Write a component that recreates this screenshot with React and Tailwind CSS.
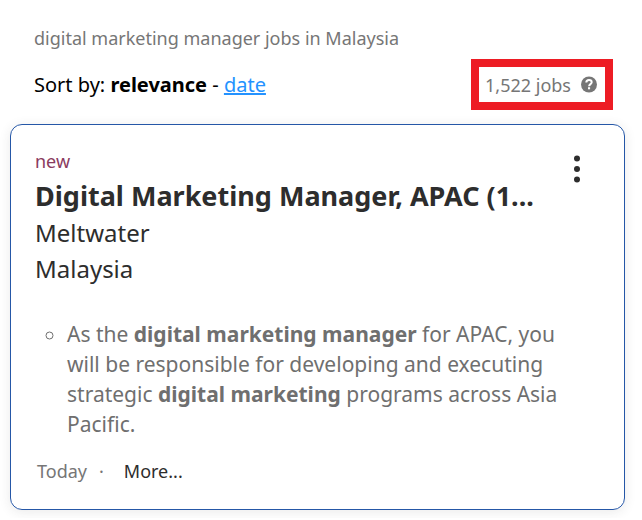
const matches = (
  <>
    As the <strong>digital marketing manager</strong> for APAC, you will be responsible for developing and
    executing strategic <strong>digital marketing</strong> programs across Asia Pacific.
  </>
)

function SearchHeader() {
  return (
    <header className="pl-6 pr-3">
      <h1 className="text-lg leading-7 text-[#767676]">digital marketing manager jobs in Malaysia</h1>
      <div className="flex items-center justify-between mt-[7px]">
        <p className="text-xl text-black">
          Sort by: <strong>relevance</strong> -{' '}
          <a href="#date" className="text-[#2492ff] underline">date</a>
        </p>
        {/* Job count */}
        <div className="flex items-center gap-2 h-[51px] px-1.5 border-8 border-[#ed1c24] text-[#767676]">
          <span className="text-lg">1,522 jobs</span>
          <button type="button" aria-label="About the job count">
            <svg viewBox="0 0 20 20" className="size-5" fill="none">
              <circle cx="10" cy="9.5" r="8" fill="#767676" />
              <path d="M7.3 7.5c0-1.6 1.1-2.5 2.7-2.5s2.7.9 2.7 2.3c0 1.8-2.6 1.9-2.6 3.9" stroke="#fff" strokeWidth="2" />
              <rect x="9" y="12.2" width="2.1" height="2.1" fill="#fff" />
            </svg>
          </button>
        </div>
      </div>
    </header>
  )
}

function JobCard() {
  return (
    <article className="mt-3.5 px-6 pt-5 pb-6 border border-[#2557a7] rounded-xl shadow-[0_2px_12px_rgba(45,45,45,0.1)]">
      <div className="flex items-start justify-between">
        <div className="text-[#2d2d2d]">
          <p className="text-lg leading-8 text-[#8a3b60]">new</p>
          <h2 className="text-[27px] leading-[38px] font-bold whitespace-nowrap">
            Digital Marketing Manager, APAC (1...
          </h2>
          <p className="text-2xl leading-9">Meltwater</p>
          <p className="text-2xl leading-9">Malaysia</p>
        </div>
        <button type="button" aria-label="Job options" className="mt-2 mr-4">
          <svg viewBox="0 0 14 32" className="w-3.5 h-8" fill="#2d2d2d">
            <circle cx="7" cy="5.5" r="3" />
            <circle cx="7" cy="16" r="3" />
            <circle cx="7" cy="26.5" r="3" />
          </svg>
        </button>
      </div>

      <ul className="mt-8 pl-8 pr-6 list-[circle] text-[21px] leading-[30px] text-[#6f6f6f]">
        <li>{matches}</li>
      </ul>

      <div className="flex items-center mt-[18px] pl-0.5 text-lg text-[#767676]">
        <span>Today</span>
        <span className="mx-3">·</span>
        <button type="button" className="ml-2 text-[#2d2d2d]">More...</button>
      </div>
    </article>
  )
}

export default function App() {
  return (
    <main className="pl-2.5 pr-[17px] pt-6 pb-2 bg-white font-['Noto_Sans',sans-serif]">
      <SearchHeader />
      <JobCard />
    </main>
  )
}
